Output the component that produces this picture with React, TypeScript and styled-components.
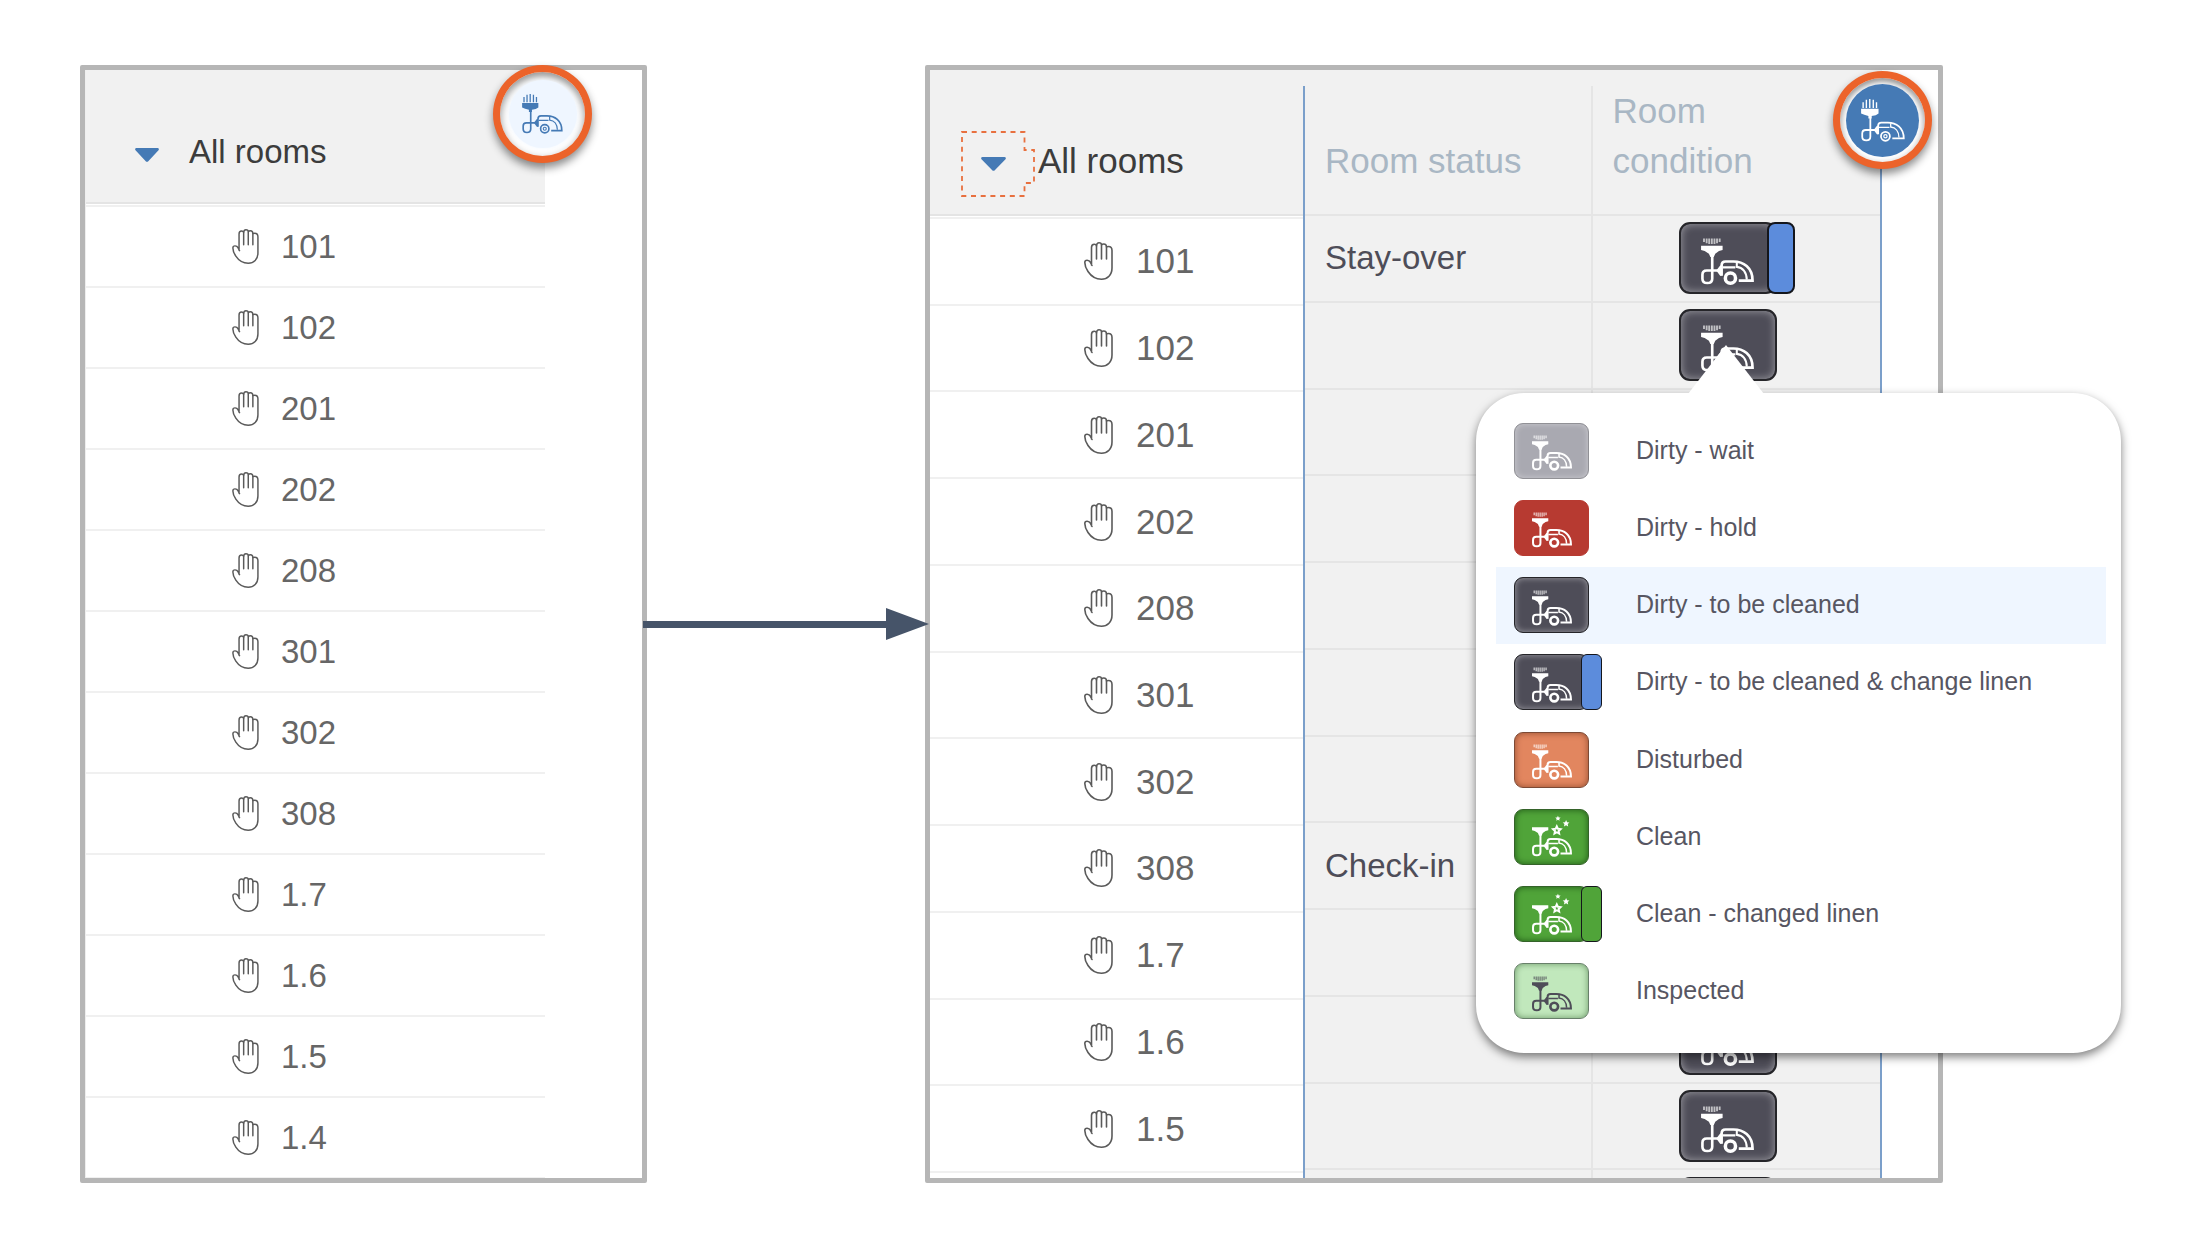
import React from "react";
import styled, { createGlobalStyle } from "styled-components";

const GlobalStyle = createGlobalStyle`
  *, *::before, *::after { box-sizing: border-box; }
  body {
    margin: 0;
    background: #fff;
    font-family: "Liberation Sans", Arial, Helvetica, sans-serif;
  }
  button { font: inherit; color: inherit; padding: 0; border: 0; background: none; cursor: pointer; }
  ul { list-style: none; margin: 0; padding: 0; }
  svg { display: block; flex: none; }
`;

const blue = "#457ab5";
const slate = "#4e4d58";
const shade = "#f1f1f1";

const Board = styled.main`
  display: grid;
  grid-template-columns: 567fr 278fr 1018fr;
  min-height: 1118px;
  margin: 65px 243px 75px 80px;
`;

const Frame = styled.section`
  position: relative;
`;

const Panel = styled.div`
  display: flex;
  height: 0;
  min-height: 100%;
  border: 5px solid #b6b6b6;
  border-radius: 2px;
  background: #fff;
  overflow: hidden;
`;

const Gutter = styled.div<{ $width: number }>`
  flex: none;
  width: ${(p) => p.$width}px;
`;

const Connector = styled.div`
  position: relative;
  z-index: 1;
  display: flex;
  align-items: center;
  margin: 0 -4px;
`;

const ConnectorLine = styled.div`
  flex: 1;
  height: 7px;
  background: #465469;
`;

const RoomColumn = styled.div<{ $wide?: boolean }>`
  flex: ${(p) => (p.$wide ? "0 0 373px" : "1")};
  font-size: ${(p) => (p.$wide ? 35 : 33)}px;
  border-left: ${(p) => (p.$wide ? "0" : "1px solid #eee")};
`;

const RoomHeader = styled.div<{ $wide?: boolean }>`
  display: flex;
  align-items: center;
  height: ${(p) => (p.$wide ? 146 : 134)}px;
  padding: ${(p) => (p.$wide ? "43px 0 0 31px" : "37px 0 0 49px")};
  gap: ${(p) => (p.$wide ? 3 : 30)}px;
  border-bottom: 2px solid #e4e4e4;
  background: ${shade};
`;

const RoomTitle = styled.span`
  padding-bottom: 6px;
  line-height: 40px;
  color: #3c3c3c;
  white-space: nowrap;
`;

const RoomList = styled.ul<{ $wide?: boolean }>`
  display: grid;
  grid-auto-rows: 1fr;
  height: ${(p) => (p.$wide ? 956 : 974)}px;
  margin-top: 1px;
  border-top: 2px solid #f0f0f0;
`;

const RoomRow = styled.li<{ $wide?: boolean }>`
  display: flex;
  align-items: center;
  gap: ${(p) => (p.$wide ? 23 : 22)}px;
  padding-left: ${(p) => (p.$wide ? 154 : 146)}px;
  border-bottom: 2px solid #f0f0f0;
  color: #666;
`;

const StatusArea = styled.div`
  flex: 1;
  padding-top: 16px;
  background: ${shade};
`;

const StatusTable = styled.table`
  display: grid;
  border: solid #7b9fca;
  border-width: 0 2px;
  color: ${slate};
  font-size: 33px;
`;

const TableHead = styled.thead`
  display: grid;
`;

const TableBody = styled.tbody`
  display: grid;
  grid-auto-rows: 1fr;
  height: 1041px;
`;

const TableRow = styled.tr`
  display: grid;
  grid-template-columns: 1fr 1fr;
`;

const HeadCell = styled.th`
  display: flex;
  align-items: flex-end;
  height: 130px;
  padding: 0 100px 28px 20px;
  border-bottom: 2px solid #e5e5e5;
  font-size: 35px;
  font-weight: 400;
  line-height: 50px;
  text-align: left;
  color: #a9b7c4;

  &:first-child { padding-right: 0; border-right: 2px solid #e5e5e5; }
`;

const StatusCell = styled.td`
  display: flex;
  align-items: center;
  padding: 0 0 0 20px;
  border: solid #e5e5e5;
  border-width: 0 2px 2px 0;
`;

const ConditionCell = styled.td`
  display: flex;
  align-items: center;
  padding: 0 0 0 86px;
  border-bottom: 2px solid #e5e5e5;
`;

type Tone = "wait" | "hold" | "dirty" | "disturbed" | "clean" | "inspected";

const tones: Record<Tone, { fill: string; edge: string; glow: string; ink: string }> = {
  wait: { fill: "#a9a9b1", edge: "#919196", glow: "rgba(255,255,255,.4)", ink: "#fff" },
  hold: { fill: "#b73a31", edge: "#b73a31", glow: "transparent", ink: "#fff" },
  dirty: { fill: slate, edge: "#252529", glow: "rgba(255,255,255,.45)", ink: "#fff" },
  disturbed: { fill: "#e2865f", edge: "#7c4a36", glow: "rgba(70,20,0,.5)", ink: "#fff" },
  clean: { fill: "#50a439", edge: "#35632a", glow: "rgba(0,40,0,.6)", ink: "#fff" },
  inspected: { fill: "#c1e8bc", edge: "#68806a", glow: "rgba(0,50,0,.45)", ink: slate },
};

const BadgeGroup = styled.span`
  display: flex;
`;

const BadgeButton = styled.button`
  display: flex;
`;

const BadgeFace = styled.span<{ $tone: Tone; $small?: boolean }>`
  display: flex;
  align-items: center;
  justify-content: center;
  width: ${(p) => (p.$small ? 75 : 98)}px;
  height: ${(p) => (p.$small ? 56 : 72)}px;
  padding-top: ${(p) => (p.$small ? 5 : 7)}px;
  border: ${(p) => (p.$small ? 1 : 2)}px solid ${(p) => tones[p.$tone].edge};
  border-radius: ${(p) => (p.$small ? 9 : 11)}px;
  background: ${(p) => tones[p.$tone].fill};
  box-shadow: inset 0 0 ${(p) => (p.$small ? 6 : 8)}px ${(p) => tones[p.$tone].glow};
  color: ${(p) => tones[p.$tone].ink};
`;

const LinenStrip = styled.span<{ $color: string; $small?: boolean }>`
  width: ${(p) => (p.$small ? 21 : 28)}px;
  margin-left: ${(p) => (p.$small ? -8 : -10)}px;
  border: ${(p) => (p.$small ? 1 : 2)}px solid #14161c;
  border-radius: ${(p) => (p.$small ? 6 : 8)}px;
  background: ${(p) => p.$color};
`;

const RingButton = styled.button<{ $top: number; $right: number }>`
  position: absolute;
  top: ${(p) => p.$top}px;
  right: ${(p) => p.$right}px;
  z-index: 2;
  display: grid;
  place-items: center;
  width: 99px;
  height: 98px;
  border: 7px solid #ec632a;
  border-radius: 50%;
  background: #fff;
  box-shadow: 0 5px 9px rgba(0, 0, 0, .45), inset 0 4px 8px rgba(0, 0, 0, .45);
`;

const Disc = styled.span<{ $active?: boolean }>`
  display: grid;
  place-items: center;
  width: ${(p) => (p.$active ? 73 : 68)}px;
  height: ${(p) => (p.$active ? 73 : 68)}px;
  border-radius: 50%;
  background: ${(p) => (p.$active ? blue : "#eff6ff")};
  color: ${(p) => (p.$active ? "#fff" : blue)};
  box-shadow: 0 0 4px ${(p) => (p.$active ? "#fff" : "#eff6ff")};
`;

const Popover = styled.div`
  position: absolute;
  top: 328px;
  left: 551px;
  z-index: 3;
  width: 645px;
  padding: 19px 15px 23px 20px;
  border-radius: 48px;
  background: #fff;
  box-shadow: 0 4px 10px rgba(0, 0, 0, .5);

  &::before {
    content: "";
    position: absolute;
    top: -48px;
    left: 212px;
    width: 76px;
    height: 49px;
    background: #fff;
    clip-path: polygon(50% 0, 100% 100%, 0 100%);
  }
`;

const OptionList = styled.ul`
  display: grid;
  grid-auto-rows: 1fr;
  height: 618px;
`;

const OptionItem = styled.li`
  display: flex;
`;

const OptionButton = styled.button<{ $selected?: boolean }>`
  flex: 1;
  display: grid;
  grid-template-columns: 122px 1fr;
  align-items: center;
  padding-left: 18px;
  background: ${(p) => (p.$selected ? "#eff6ff" : "transparent")};
  color: #575662;
  font-size: 25px;
  line-height: 30px;
  text-align: left;
`;

const OptionLabel = styled.span`
  padding-bottom: 2px;
`;

const DisclosureButton = styled.button`
  display: block;
`;

const Caret = () => (
  <svg width="24" height="14" viewBox="0 0 24 14" aria-hidden="true">
    <path d="M1.5 0h21c1.3 0 1.8 1.3 1 2.2L13.5 13a2 2 0 0 1-3 0L.5 2.2C-.3 1.3.2 0 1.5 0z" fill={blue} />
  </svg>
);

const OutlinedCaret = () => (
  <svg width="74" height="66" viewBox="0 0 74 66" aria-hidden="true">
    <path
      d="M1 1H63.5V19H73V52H63.5V65H1z"
      fill="none"
      stroke="#e8703f"
      strokeWidth="1.8"
      strokeDasharray="5 4.7"
    />
    <path d="M21.5 26h22c1.3 0 1.8 1.3 1 2.2L34 39a2 2 0 0 1-3 0L20.5 28.2c-.8-.9-.3-2.2 1-2.2z" fill={blue} />
  </svg>
);

const Hand = ({ width }: { width: number }) => (
  <svg
    width={width}
    height={Math.round((width * 38) / 29)}
    viewBox="0 0 29 38"
    fill="none"
    stroke="#5a5a5a"
    strokeWidth="1.6"
    strokeLinejoin="round"
    strokeLinecap="round"
    aria-hidden="true"
  >
    <path d="M7.5 23V5.5C7.5 3 9 2.2 10.3 2.2c1 0 2 .6 2.2 1.6C12.7 1.8 13.6.8 15 .8s2.500 1 2.500 2.200c.6-.8 1.500-1 2.300-1 1.700 0 2.700 1 2.700 3 .5-.4 1.200-.5 2-.5 2.300 0 3.500 1.500 3.500 4V26c0 7-4.500 11.200-10.500 11.200-7 0-10.500-3.200-13.500-7.700C2 26.500.8 22.500.8 20.500c0-2.800 4.200-3 5.700 0L8 23.500" />
    <path d="M12.5 4v13M17.5 3.5v13.5M22.5 5v12" />
  </svg>
);

const starPath = (cx: number, cy: number, r: number) =>
  Array.from({ length: 10 }, (_, i) => {
    const radius = i % 2 ? r * 0.48 : r;
    const angle = (Math.PI / 5) * i - Math.PI / 2;
    return `${i ? "L" : "M"}${(cx + radius * Math.cos(angle)).toFixed(2)} ${(cy + radius * Math.sin(angle)).toFixed(2)}`;
  }).join("") + "z";

type VacuumProps = { width: number; top?: "short" | "tall" | "stars" };

const Vacuum = ({ width, top = "short" }: VacuumProps) => {
  const tall = top === "tall";
  const height = tall ? 53 : 48;
  const line = tall ? 2.2 : 2.7;
  return (
    <svg
      width={width}
      height={Math.round((width * height) / 54)}
      viewBox={`0 ${48 - height} 54 ${height}`}
      overflow="visible"
      fill="none"
      stroke="currentColor"
      aria-hidden="true"
    >
      {top === "short" && (
        <path strokeWidth="1.9" opacity=".65" d="M3 .5v3.5M5.700 .5v4.8M8.300 .5v5.5M11 .5v5.5M13.700 .5v5.5M16.300 .5v4.8M19 .5v3.5" />
      )}
      {tall && <path strokeWidth="1.7" d="M2.500-1v7M6.500-4v10M10.700-5V6M15-4V6M19-1v7" />}
      {top === "stars" && (
        <>
          <path d={starPath(33.5, 12.3, 5.4)} strokeWidth="2.6" />
          <path d={starPath(46, 3.2, 4.8)} fill="currentColor" stroke="none" />
          <path d={starPath(35, -3.7, 3.8)} fill="currentColor" stroke="none" />
        </>
      )}
      <path
        d={tall ? "M0 7h21.5v6l-3.500 2-5 1v3H9v-3L4 14.500l-4-1.500z" : "M0 8h22v4.200l-3.700 1-3.800 2.800L13 19.500H9.500L8 16 3.700 13.200 0 12.200z"}
        fill="currentColor"
        stroke="none"
      />
      <path
        d="M11.4 16V41.500Q11.400 46 6.400 46T1.400 41.500V37.500Q1.400 33.200 5.800 33.200H18"
        strokeWidth={line}
      />
      <path d="M15.500 33.200L19.500 28h1.500v10.500h-1.500z" fill="currentColor" stroke="none" />
      <path
        d="M21 38.500V28Q21 24 25 24H33C43 24 52.600 30 52.600 43.600H38.500"
        strokeWidth={line}
      />
      <path d="M22 30h13M36.500 25v4.500c6 .5 10 5.500 10.200 13" strokeWidth={line - 0.6} />
      <circle cx="30" cy="41" r={tall ? 5.5 : 5.2} strokeWidth={tall ? 2.2 : 3.6} />
      {tall && <circle cx="30" cy="41" r="2" strokeWidth="1.5" />}
    </svg>
  );
};

type BadgeProps = { tone: Tone; linen?: string; small?: boolean };

const Badge = ({ tone, linen, small }: BadgeProps) => (
  <BadgeGroup>
    <BadgeFace $tone={tone} $small={small}>
      <Vacuum width={small ? 40 : 53} top={tone === "clean" ? "stars" : "short"} />
    </BadgeFace>
    {linen && <LinenStrip $color={linen} $small={small} />}
  </BadgeGroup>
);

const linenBlue = "#5c8cdc";
const linenGreen = "#50a439";

type Room = { name: string; status?: string; linen?: string };

const rooms: Room[] = [
  { name: "101", status: "Stay-over", linen: linenBlue },
  { name: "102" },
  { name: "201" },
  { name: "202" },
  { name: "208" },
  { name: "301" },
  { name: "302" },
  { name: "308", status: "Check-in" },
  { name: "1.7" },
  { name: "1.6" },
  { name: "1.5" },
  { name: "1.4" },
];

const options: { label: string; tone: Tone; linen?: string; selected?: boolean }[] = [
  { label: "Dirty - wait", tone: "wait" },
  { label: "Dirty - hold", tone: "hold" },
  { label: "Dirty - to be cleaned", tone: "dirty", selected: true },
  { label: "Dirty - to be cleaned & change linen", tone: "dirty", linen: linenBlue },
  { label: "Disturbed", tone: "disturbed" },
  { label: "Clean", tone: "clean" },
  { label: "Clean - changed linen", tone: "clean", linen: linenGreen },
  { label: "Inspected", tone: "inspected" },
];

const Rooms = ({ items, wide }: { items: Room[]; wide?: boolean }) => (
  <RoomColumn $wide={wide}>
    <RoomHeader $wide={wide}>
      <DisclosureButton aria-label="Toggle all rooms" aria-expanded="true">
        {wide ? <OutlinedCaret /> : <Caret />}
      </DisclosureButton>
      <RoomTitle>All rooms</RoomTitle>
    </RoomHeader>
    <RoomList $wide={wide}>
      {items.map((room) => (
        <RoomRow key={room.name} $wide={wide}>
          <Hand width={wide ? 29 : 27} />
          {room.name}
        </RoomRow>
      ))}
    </RoomList>
  </RoomColumn>
);

export default function App() {
  return (
    <>
      <GlobalStyle />
      <Board>
        <Frame>
          <Panel>
            <Rooms items={rooms} />
            <Gutter $width={97} />
          </Panel>
          <RingButton $top={0} $right={55} aria-label="Show housekeeping">
            <Disc>
              <Vacuum width={41} top="tall" />
            </Disc>
          </RingButton>
        </Frame>

        <Connector>
          <ConnectorLine />
          <svg width="43" height="32" viewBox="0 0 43 32" aria-hidden="true">
            <path d="M0 0l43 16L0 32z" fill="#465469" />
          </svg>
        </Connector>

        <Frame>
          <Panel>
            <Rooms items={rooms.slice(0, 11)} wide />
            <StatusArea>
              <StatusTable>
                <TableHead>
                  <TableRow>
                    <HeadCell scope="col">Room status</HeadCell>
                    <HeadCell scope="col">Room condition</HeadCell>
                  </TableRow>
                </TableHead>
                <TableBody>
                  {rooms.map((room) => (
                    <TableRow key={room.name}>
                      <StatusCell>{room.status}</StatusCell>
                      <ConditionCell>
                        <BadgeButton aria-label={`Condition of room ${room.name}`}>
                          <Badge tone="dirty" linen={room.linen} />
                        </BadgeButton>
                      </ConditionCell>
                    </TableRow>
                  ))}
                </TableBody>
              </StatusTable>
            </StatusArea>
            <Gutter $width={56} />
          </Panel>
          <RingButton $top={6} $right={11} aria-label="Hide housekeeping">
            <Disc $active>
              <Vacuum width={44} top="tall" />
            </Disc>
          </RingButton>
          <Popover>
            <OptionList>
              {options.map((option) => (
                <OptionItem key={option.label}>
                  <OptionButton $selected={option.selected} aria-pressed={!!option.selected}>
                    <Badge tone={option.tone} linen={option.linen} small />
                    <OptionLabel>{option.label}</OptionLabel>
                  </OptionButton>
                </OptionItem>
              ))}
            </OptionList>
          </Popover>
        </Frame>
      </Board>
    </>
  );
}
